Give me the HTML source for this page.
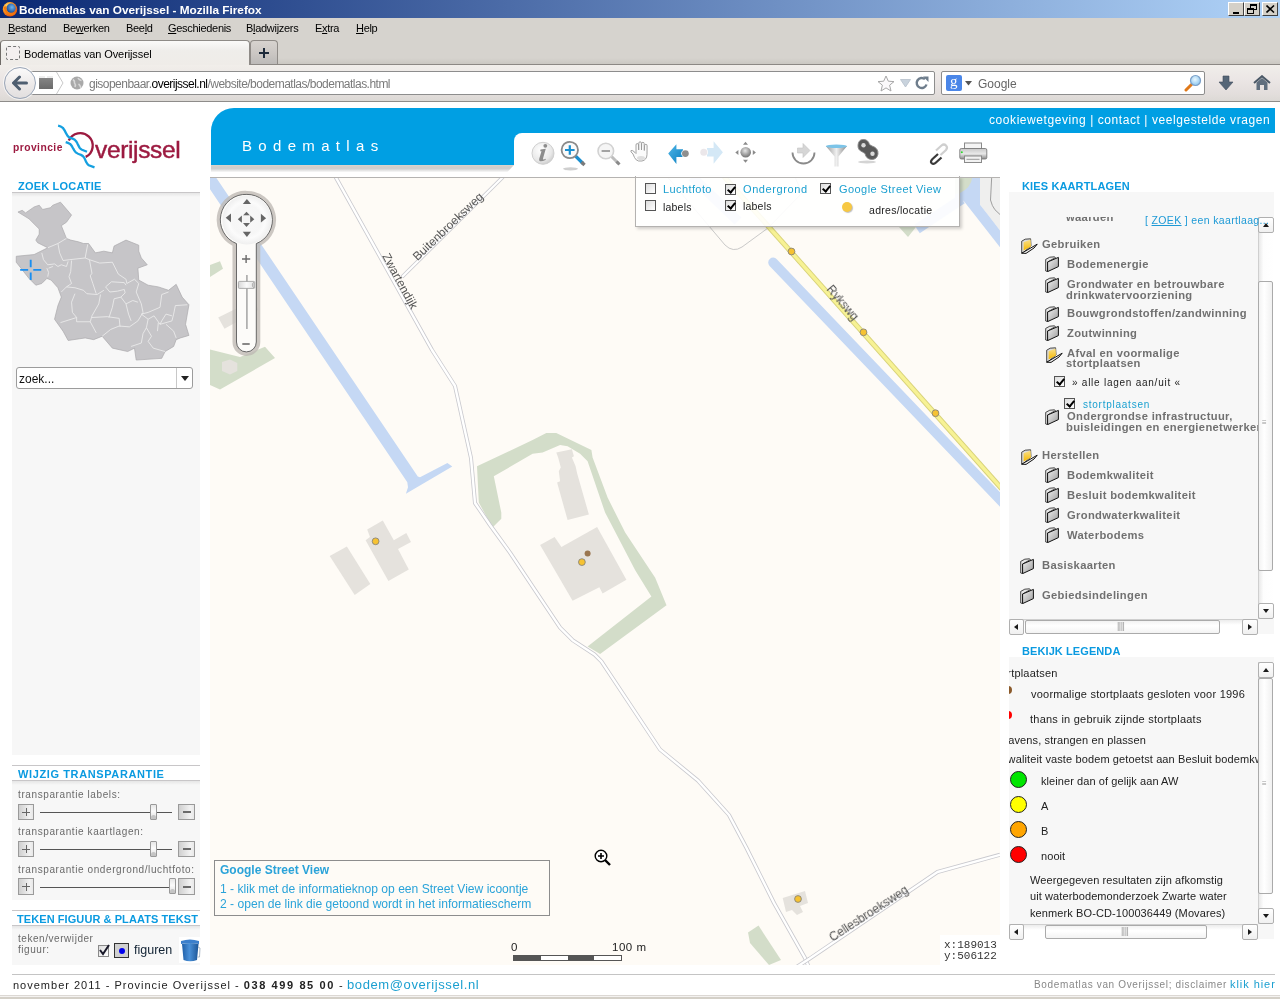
<!DOCTYPE html>
<html><head><meta charset="utf-8">
<style>
*{margin:0;padding:0;box-sizing:border-box}
html,body{width:1280px;height:999px;overflow:hidden;background:#fff;font-family:"Liberation Sans",sans-serif;position:relative}
.a{position:absolute}
.t{position:absolute;white-space:nowrap;line-height:1;will-change:transform}
/* chrome */
#title{left:0;top:0;width:1280px;height:17px;background:linear-gradient(90deg,#0a246a 0%,#3a6ea5 45%,#a6caf0 100%)}
#menubar{left:0;top:17px;width:1280px;height:24px;background:#d6d3ce}
#tabbar{left:0;top:41px;width:1280px;height:23px;background:#d6d3ce}
#navbar{left:0;top:64px;width:1280px;height:37px;background:linear-gradient(#e9e6e3,#e2dfdc)}
.wbtn{position:absolute;top:2px;width:16px;height:14px;background:#d4d0c8;border:1px solid;border-color:#fff #404040 #404040 #fff}
.menu{font-size:11px;color:#000;top:23.2px;letter-spacing:-0.3px}
.menu u{text-decoration:underline}
.hdr{font-weight:bold;color:#0a9ae0;font-size:10px;transform:scaleX(1.1);transform-origin:0 0}
.gbox{background:#f7f7f7}
.sbtn{position:absolute;width:16px;height:16px;background:linear-gradient(#fff,#eee);border:1px solid #b9b9b9;border-radius:2px}
.cb{width:11px;height:11px;border:1px solid #555;background:linear-gradient(135deg,#ddd,#fff)}
.cb.on::after{content:"";position:absolute;left:3px;top:0px;width:3px;height:6px;border:solid #000;border-width:0 2px 2px 0;transform:rotate(40deg)}
.sbb{width:16px;height:16px;background:linear-gradient(#fff,#f0f0f0);border:1px solid #b0b0b0;border-radius:2px}
.tri{position:absolute;width:0;height:0}
.tri.up{left:4px;top:5px;border-left:3.5px solid transparent;border-right:3.5px solid transparent;border-bottom:4px solid #1a1a1a}
.tri.dn{left:4px;top:5px;border-left:3.5px solid transparent;border-right:3.5px solid transparent;border-top:4px solid #1a1a1a}
.tri.lf{left:4px;top:3.5px;border-top:3.5px solid transparent;border-bottom:3.5px solid transparent;border-right:4px solid #1a1a1a}
.tri.rt{left:5px;top:3.5px;border-top:3.5px solid transparent;border-bottom:3.5px solid transparent;border-left:4px solid #1a1a1a}
.pbtn{width:16.5px;height:16.5px;border:1px solid #9a9a9a;background:linear-gradient(90deg,#cfcfcf,#f2f2f2 75%,#e8e8e8)}
.pl{position:absolute;left:3.5px;top:7px;width:8px;height:1px;background:#666}
.pv{position:absolute;left:7px;top:3.5px;width:1px;height:8px;background:#666}
.pl.mn{height:2px;top:6.5px;background:#6a6a6a}
.shnd::after{content:"";position:absolute;left:0;bottom:0;width:5.2px;height:4px;border-radius:3px 3px 0 0;background:#c4c4c4}
.shnd{width:7.2px;height:16.3px;border:1px solid #999;border-radius:1px;background:linear-gradient(#e6e6e6,#fbfbfb 45%,#eee 70%,#ddd)}
</style></head><body>

<!-- title bar -->
<div class="a" style="left:0;top:0;width:1280px;height:18px;background:linear-gradient(90deg,#0a2873,#b0d3f8)"></div>
<svg class="a" style="left:2px;top:1px" width="16" height="16" viewBox="0 0 16 16"><defs><radialGradient id="ffg" cx="0.35" cy="0.3" r="0.8"><stop offset="0" stop-color="#ffe37a"/><stop offset="0.45" stop-color="#ff9a1f"/><stop offset="1" stop-color="#d8400e"/></radialGradient><radialGradient id="ffb" cx="0.6" cy="0.4" r="0.6"><stop offset="0" stop-color="#6fb6ef"/><stop offset="1" stop-color="#1b4f9c"/></radialGradient></defs><circle cx="8" cy="8.3" r="7.2" fill="url(#ffg)"/><circle cx="9" cy="7.2" r="4.6" fill="url(#ffb)"/><path d="M1.5 6 Q3 13 9 14.5 Q14 14 15 9 Q13 13 8.5 12.5 Q4 11 4.5 5 Z" fill="#f0780f"/></svg>
<div class="t" style="left:19px;top:4.5px;font-size:11.8px;font-weight:bold;color:#fff">Bodematlas van Overijssel - Mozilla Firefox</div>
<div class="wbtn" style="left:1228px"><div class="a" style="left:4px;top:9px;width:6px;height:2px;background:#000"></div></div>
<div class="wbtn" style="left:1244px"><div class="a" style="left:5px;top:1px;width:7px;height:6px;border:1px solid #000;border-top-width:2px"></div><div class="a" style="left:2px;top:5px;width:7px;height:6px;border:1px solid #000;border-top-width:2px;background:#d4d0c8"></div></div>
<div class="wbtn" style="left:1262px"><svg class="a" style="left:3px;top:2px" width="9" height="8"><path d="M0.5 0.5 L8 7.5 M8 0.5 L0.5 7.5" stroke="#000" stroke-width="1.6"/></svg></div>

<!-- menu -->
<div class="a" style="left:0;top:18px;width:1280px;height:46px;background:#d6d3ce"></div>
<div class="t menu" style="left:7.8px"><u>B</u>estand</div>
<div class="t menu" style="left:62.5px">Be<u>w</u>erken</div>
<div class="t menu" style="left:125.8px">Bee<u>l</u>d</div>
<div class="t menu" style="left:167.5px"><u>G</u>eschiedenis</div>
<div class="t menu" style="left:245.5px">B<u>l</u>adwijzers</div>
<div class="t menu" style="left:314.5px">E<u>x</u>tra</div>
<div class="t menu" style="left:356px"><u>H</u>elp</div>

<!-- tabs -->
<div class="a" style="left:0;top:58px;width:1280px;height:6px;background:linear-gradient(#d6d3ce,#cbc8c2)"></div><div class="a" style="left:0;top:64px;width:1280px;height:1px;background:#8c8884"></div>
<div class="a" style="left:0;top:40px;width:250px;height:25px;background:linear-gradient(#fbfaf9,#efedea 40%,#efece8);border:1px solid #8f8b87;border-bottom:none;border-left-color:#6f6b67;border-radius:4px 4px 0 0"></div>
<div class="a" style="left:6px;top:46px;width:14px;height:14px;border:1px dashed #777;border-radius:2px;background:#f4f0f0"></div>
<div class="t" style="left:23.5px;top:48.9px;font-size:11px;color:#000;letter-spacing:-0.11px">Bodematlas van Overijssel</div>
<div class="a" style="left:250px;top:40px;width:28px;height:24px;background:linear-gradient(#d7d3cf,#c9c5c2 60%,#bcbab8);border:1px solid #8f8b87;border-bottom:none;border-radius:4px 4px 0 0"></div>
<div class="a" style="left:259px;top:52px;width:10px;height:2.2px;background:#1d2a3a"></div>
<div class="a" style="left:262.9px;top:48px;width:2.2px;height:10px;background:#1d2a3a"></div>

<!-- nav -->
<div class="a" style="left:0;top:65px;width:1280px;height:36px;background:linear-gradient(#f1eeea,#ebe6e5 40%,#e3dedc 80%,#dcd9d5)"></div>
<div class="a" style="left:0;top:101px;width:1280px;height:1px;background:#8e8c8a"></div>
<div class="a" style="left:30px;top:71px;width:905px;height:24px;background:#fff;border:1px solid #8d8d8d;border-radius:2px"></div>
<div class="a" style="left:4px;top:67px;width:32px;height:32px;border-radius:50%;background:linear-gradient(#fbfafa,#ebe8e8 60%,#e2dfdf);border:1px solid #9aa6b8;box-shadow:0 0 0 1px rgba(255,255,255,0.6)"></div>
<svg class="a" style="left:12px;top:75px" width="16" height="16" viewBox="0 0 16 16"><path d="M1.5 8 L7.5 2 M1.5 8 L7.5 14 M2 8 H14.5" stroke="#4e5e70" stroke-width="3" stroke-linecap="round" fill="none"/></svg>
<div class="a" style="left:39px;top:76px;width:14px;height:13px;background:linear-gradient(#8a8a8a,#6a6a6a)"></div>
<div class="a" style="left:39px;top:76px;width:14px;height:2px;background:#eee"></div>
<div class="a" style="left:45px;top:74px;width:2px;height:4px;background:#fff"></div>
<svg class="a" style="left:56px;top:72px" width="8" height="22"><path d="M0.5 0 L7 11 L0.5 22" fill="none" stroke="#c8c8c8" stroke-width="1"/></svg>
<svg class="a" style="left:70px;top:76px" width="14" height="14" viewBox="0 0 14 14"><circle cx="7" cy="7" r="6.5" fill="#a9a9a9"/><path d="M3 3.5 Q5 5 4.5 7 Q6 8.5 5 11 M8 2 Q9 4 11.5 4.5 M8.5 8 Q10 9 11 12" stroke="#d8d8d8" stroke-width="1.6" fill="none"/></svg>
<div class="t" style="left:88.5px;top:78.4px;font-size:12px;color:#7a7a7a;letter-spacing:-0.52px">gisopenbaar.<span style="color:#000">overijssel.nl</span>/website/bodematlas/bodematlas.html</div>
<svg class="a" style="left:877px;top:75px" width="18" height="17" viewBox="0 0 18 17"><path d="M9 1 L11.3 6.2 L17 6.6 L12.6 10.2 L14 16 L9 12.9 L4 16 L5.4 10.2 L1 6.6 L6.7 6.2 Z" fill="#fbf9fb" stroke="#a8a8a8" stroke-width="1"/></svg>
<svg class="a" style="left:900px;top:79px" width="11" height="9"><path d="M0.5 0.5 L10.5 0.5 L5.5 8 Z" fill="#c9d3dd" stroke="#b5bfca" stroke-width="0.8"/></svg>
<svg class="a" style="left:915px;top:76px" width="15" height="14" viewBox="0 0 15 14"><path d="M11.5 8.5 A5 5 0 1 1 10 3.2" fill="none" stroke="#6e7d8c" stroke-width="2.4"/><path d="M8 0.5 L13.5 0.5 L13.5 6 Z" fill="#6e7d8c"/></svg>
<div class="a" style="left:941px;top:71px;width:264px;height:24px;background:#fff;border:1px solid #8d8d8d;border-radius:2px"></div>
<div class="a" style="left:946px;top:75px;width:16px;height:16px;background:#4a86e8;border-radius:2px"></div>
<div class="t" style="left:949.5px;top:73.5px;font-family:'Liberation Serif';font-size:15px;color:#fff">g</div>
<svg class="a" style="left:965px;top:81px" width="7" height="5"><path d="M0 0 L7 0 L3.5 4.5 Z" fill="#555"/></svg>
<div class="t" style="left:977.5px;top:78.4px;font-size:12px;color:#666">Google</div>
<svg class="a" style="left:1184px;top:74px" width="18" height="18" viewBox="0 0 18 18"><defs><radialGradient id="lens" cx="0.45" cy="0.4" r="0.6"><stop offset="0" stop-color="#eaf8ff"/><stop offset="1" stop-color="#8cc6ee"/></radialGradient></defs><path d="M2 16 L7.5 10.5" stroke="#e07818" stroke-width="3" stroke-linecap="round"/><circle cx="11.5" cy="6.5" r="5" fill="url(#lens)" stroke="#7da0c8" stroke-width="1.2"/></svg>
<svg class="a" style="left:1218px;top:75px" width="16" height="16" viewBox="0 0 16 16"><path d="M5 1 H11 V7 H15 L8 15 L1 7 H5 Z" fill="#556677" stroke="#3f4c5a" stroke-width="0.6"/></svg>
<svg class="a" style="left:1253px;top:75px" width="18" height="16" viewBox="0 0 18 16"><path d="M1 8 L9 1.2 L17 8" fill="none" stroke="#4a5866" stroke-width="2"/><path d="M3.5 7.5 L9 3 L14.5 7.5 V15 H11 V10 H7 V15 H3.5 Z" fill="#5f6e7d"/></svg>

<!-- page: logo -->
<div class="t" style="left:13.2px;top:142.5px;font-size:10.3px;font-weight:bold;color:#9c1a40;letter-spacing:0.45px">provincie</div>
<div class="t" style="left:95px;top:137.8px;font-size:24.5px;color:#9c1a40;letter-spacing:-0.35px;-webkit-text-stroke:0.45px #9c1a40">verijssel</div>
<svg class="a" style="left:55px;top:122px" width="42" height="48" viewBox="55 122 42 48">
<path d="M68.8 140.6 A12.5 12.5 0 1 1 85.7 156.9" fill="none" stroke="#9c1a40" stroke-width="2.4"/>
<path d="M58.1 125.7 Q61 126.3 62.8 127.8 Q64.5 130 65.9 133 Q67.5 136.5 69.6 137.7 Q73 138.8 74.8 139.8 Q76.5 141.2 77.4 143.4 L79.5 147.6 Q80.5 149 82 149.7 L87 151.7" fill="none" stroke="#15a0e0" stroke-width="2.3"/>
<path d="M65.7 142.1 Q68 142.8 70.1 143.9 Q72 145.8 73.2 148.6 Q74.3 151 75.8 152.3 Q78 154 81 154.9 Q83 155.8 84.1 157.5 Q85.3 159.8 86.2 162.1 Q87.3 164.3 88.8 165.3 L94.5 167.3" fill="none" stroke="#15a0e0" stroke-width="2.3"/>
</svg>

<!-- blue header -->
<div class="a" style="left:211px;top:108px;width:1064px;height:25px;background:#009fe3;border-radius:23px 0 0 0"></div><div class="a" style="left:500px;top:130px;width:30px;height:12px;background:#009fe3"></div>
<div class="a" style="left:211px;top:130px;width:303px;height:35px;background:#009fe3"></div>
<svg class="a" style="left:211px;top:165px" width="303" height="8"><defs><linearGradient id="shd" x1="0" y1="0" x2="0" y2="1"><stop offset="0" stop-color="#ddd5cd"/><stop offset="0.25" stop-color="#d0cdca"/><stop offset="0.5" stop-color="#cfcfcf"/><stop offset="1" stop-color="#ffffff"/></linearGradient></defs><path d="M0 0 H303 L296 7.5 H0 Z" fill="url(#shd)"/></svg>
<div class="a" style="left:514px;top:133px;width:500px;height:44px;background:#fff;border-radius:8px 0 0 0"></div>
<div class="t" style="left:241.6px;top:138.1px;font-size:15px;color:#fff;letter-spacing:6.33px">Bodematlas</div>
<div class="t" style="left:989.4px;top:114.0px;font-size:12px;color:#fff;letter-spacing:0.57px">cookiewetgeving | contact | veelgestelde vragen</div>

<!-- toolbar icons -->
<svg class="a" style="left:525px;top:135px" width="470" height="40" viewBox="525 135 470 40">
<defs>
<radialGradient id="ig" cx="0.4" cy="0.35" r="0.7"><stop offset="0" stop-color="#ffffff"/><stop offset="0.7" stop-color="#e8e8e8"/><stop offset="1" stop-color="#c9c9c9"/></radialGradient>
<linearGradient id="bl" x1="0" y1="0" x2="1" y2="1"><stop offset="0" stop-color="#4fb6e8"/><stop offset="1" stop-color="#0b7fc0"/></linearGradient>
<linearGradient id="gr" x1="0" y1="0" x2="0" y2="1"><stop offset="0" stop-color="#c8c8c8"/><stop offset="0.5" stop-color="#e8e8e8"/><stop offset="1" stop-color="#8a8a8a"/></linearGradient>
<linearGradient id="fun" x1="0" x2="1"><stop offset="0" stop-color="#9a9a9a"/><stop offset="0.5" stop-color="#f0f0f0"/><stop offset="1" stop-color="#8a8a8a"/></linearGradient>
<radialGradient id="ball" cx="0.45" cy="0.35" r="0.6"><stop offset="0" stop-color="#e6e6e6"/><stop offset="1" stop-color="#7a7a7a"/></radialGradient>
</defs>
<!-- info -->
<circle cx="543" cy="153.3" r="11" fill="url(#ig)" stroke="#d0d0d0" stroke-width="1"/>
<circle cx="545.3" cy="145.8" r="1.9" fill="#8c8c8c"/>
<path d="M540.5 149.5 L545.8 148.8 L543 158.5 Q542.6 160 544.5 159.3 L545.8 158.7 L545.5 160 Q541.5 162 539.6 161 Q538.8 160.2 539.3 158.5 L541.5 151.2 L540.2 151.3 Z" fill="#8c8c8c"/>
<!-- zoom in -->
<ellipse cx="570.5" cy="168.8" rx="7.5" ry="1.6" fill="#cfcfcf"/>
<path d="M575.5 156 L583 163.5" stroke="#1a8fd0" stroke-width="3.2" stroke-linecap="butt"/>
<path d="M581.5 162 L584.5 165" stroke="#7a7a7a" stroke-width="3.4"/>
<circle cx="569.8" cy="150" r="8.2" fill="#fafafa" stroke="#8a8a8a" stroke-width="1.8"/>
<path d="M565 150 H574.6 M569.8 145.2 V154.8" stroke="#1a8fd0" stroke-width="2.2"/>
<!-- zoom out -->
<path d="M611.5 156.5 L618.5 163.5" stroke="#bdbdbd" stroke-width="3"/>
<path d="M616.5 161.5 L619.5 164.5" stroke="#8a8a8a" stroke-width="3"/>
<circle cx="605.8" cy="151" r="7.8" fill="#f5f5f5" stroke="#d2d2d2" stroke-width="1.6"/>
<path d="M601.6 151 H610" stroke="#9a9a9a" stroke-width="1.8"/>
<!-- hand -->
<path d="M633 154 Q630 151.5 631 150.5 Q632.5 149.8 635 152.5 L636 153.5 L636 145 Q636 143.5 637.3 143.5 Q638.5 143.5 638.5 145 L638.7 150 L638.8 143.2 Q638.8 141.8 640.1 141.8 Q641.4 141.8 641.4 143.2 L641.5 150 L641.6 143.6 Q641.6 142.3 642.9 142.3 Q644.2 142.3 644.2 143.6 L644.3 150.5 L644.6 145.5 Q644.7 144.3 645.9 144.3 Q647.2 144.4 647.1 145.8 L647 154.5 Q646.8 160 642 161 L638.5 161 Q636 160.5 634.5 157.5 Z" fill="#fbfbfb" stroke="#9a9a9a" stroke-width="0.9"/>
<ellipse cx="641" cy="158" rx="4" ry="2" fill="#dedede"/>
<!-- back -->
<path d="M668.2 153.6 L676.4 144.3 L676.4 149.2 L683 149.2 L683 156.9 L676.4 156.9 L676.4 164 Z" fill="url(#bl)"/>
<circle cx="685.4" cy="153.6" r="4.2" fill="#fff"/>
<circle cx="685.4" cy="153.6" r="3.4" fill="#8e8e8e"/>
<!-- forward -->
<path d="M722.9 152.3 L713.6 141.2 L713.6 148.1 L707 148.1 L707 156.4 L713.6 156.4 L713.6 163.8 Z" fill="#d4e8f6"/>
<circle cx="703.8" cy="152.3" r="4.2" fill="#fff"/>
<circle cx="703.8" cy="152.3" r="3.5" fill="#ebe7ea"/>
<!-- pan -->
<circle cx="745.7" cy="152.3" r="5.3" fill="url(#ball)"/>
<path d="M745.5 141.8 L748 144.8 L743 144.8 Z M745.5 162.8 L748 159.8 L743 159.8 Z M735.3 152.5 L738.4 150 L738.4 155 Z M755.9 152.5 L752.8 150 L752.8 155 Z" fill="#8a8a8a"/>
<!-- refresh arc -->
<path d="M792.5 152.5 A11 11 0 0 0 814.5 152.5" fill="none" stroke="#8a8a8a" stroke-width="1.8"/>
<path d="M797.5 148 L803 148 L803 143.5 L810 150.5 L803 157.5 L803 153 L797.5 153 Z" fill="#d6d6d6" stroke="#c2c2c2" stroke-width="0.6"/>
<!-- funnel -->
<path d="M825.8 146 L847 146 L838.5 156.5 L838.5 166.5 L834.5 166.5 L834.5 156.5 Z" fill="url(#fun)"/>
<ellipse cx="836.4" cy="146.3" rx="10.5" ry="1.8" fill="#7cc4e8"/>
<!-- chain -->
<ellipse cx="867" cy="162" rx="9" ry="1.4" fill="#d4d4d4"/>
<path d="M862.5 139.5 Q868 139 869.5 144.5 L872 146 Q878.5 148 878 154 Q877 159.5 871.5 159.5 Q866 159 865 153.5 L862.5 152 Q857.5 150 858 145 Q858.5 140 862.5 139.5 Z" fill="#5a5a5a" stroke="#8a8a8a" stroke-width="0.9"/>
<circle cx="863.5" cy="145.3" r="2.2" fill="#dadada"/>
<circle cx="872.5" cy="153.8" r="2.2" fill="#dadada"/>
<!-- link -->
<path d="M936 150.5 L941.5 145.5 Q944 143.5 946 145.5 Q948 147.5 946 150 L940.5 155" fill="none" stroke="#cfcfcf" stroke-width="2.2"/>
<path d="M938 154 L932.5 159 Q930 161.5 931.5 163 Q933.5 165 936 162.5 L941.5 157.5" fill="none" stroke="#3a3a3a" stroke-width="2.2"/>
<!-- printer -->
<rect x="964.5" y="143" width="17" height="6" fill="#f4f4f4" stroke="#8a8a8a" stroke-width="1"/>
<rect x="959.8" y="148.5" width="27" height="10.5" rx="1.5" fill="url(#gr)" stroke="#7a7a7a" stroke-width="0.9"/>
<rect x="964.5" y="156" width="17" height="6.5" fill="#f2f2f2" stroke="#8a8a8a" stroke-width="1"/>
<line x1="966.5" y1="159.3" x2="979.5" y2="159.3" stroke="#9a9a9a" stroke-width="1"/>
<circle cx="961.8" cy="152.2" r="1" fill="#2ad92a"/>
</svg>

<!-- left panel -->
<div class="t hdr" style="left:17.5px;top:181.8px;letter-spacing:0.18px">ZOEK LOCATIE</div>
<div class="a gbox" style="left:12px;top:192px;width:188px;height:563px;border-top:1px solid #c8c6c8"></div>
<svg class="a" style="left:12px;top:195px" width="188" height="170" viewBox="0 0 1105 999"><polygon points="35,100 60,90 80,105 130,70 160,60 180,85 225,75 240,60 285,42 350,118 320,160 290,180 320,255 345,265 390,275 420,285 450,285 490,340 540,330 590,340 600,300 670,265 745,295 745,330 760,370 795,410 740,430 745,500 800,530 860,540 920,560 965,525 1000,600 1040,645 1020,760 1040,825 990,840 965,850 950,890 900,920 880,960 730,970 720,900 680,920 590,900 530,830 480,850 430,840 330,855 300,800 250,730 270,650 290,600 270,545 230,500 205,490 175,520 140,530 100,490 25,395 25,360 130,350 210,310 150,280 140,265 160,230 160,200 100,140" fill="#c6c5c8" stroke="#a9a8ab" stroke-width="4"/><polyline points="210,310 270,285 320,255" fill="none" stroke="#ececec" stroke-width="5"/><polyline points="270,285 280,340 300,385 340,380 430,370 445,290" fill="none" stroke="#ececec" stroke-width="5"/><polyline points="175,340 185,380 210,410 250,405 270,420 290,410 320,420 330,390" fill="none" stroke="#ececec" stroke-width="5"/><polyline points="205,430 215,455 210,480" fill="none" stroke="#ececec" stroke-width="5"/><polyline points="215,430 240,420" fill="none" stroke="#ececec" stroke-width="5"/><polyline points="350,385 345,450 335,480 350,520 320,540 290,570" fill="none" stroke="#ececec" stroke-width="5"/><polyline points="430,370 455,380 470,460 460,475 475,520 495,580" fill="none" stroke="#ececec" stroke-width="5"/><polyline points="320,540 370,545 420,560 440,580 500,585 540,560" fill="none" stroke="#ececec" stroke-width="5"/><polyline points="455,380 515,400 590,395 625,465 670,495 675,520 720,495 745,520" fill="none" stroke="#ececec" stroke-width="5"/><polyline points="550,540 585,510 660,515 670,530" fill="none" stroke="#ececec" stroke-width="5"/><polyline points="550,540 575,570 620,565 660,555 665,575 640,600 600,610 590,660 570,720" fill="none" stroke="#ececec" stroke-width="5"/><polyline points="370,580 350,630 355,690 380,720 380,745 460,745 470,710 510,640 520,585" fill="none" stroke="#ececec" stroke-width="5"/><polyline points="285,750 380,720" fill="none" stroke="#ececec" stroke-width="5"/><polyline points="460,745 495,810" fill="none" stroke="#ececec" stroke-width="5"/><polyline points="470,720 560,715 630,725 635,775" fill="none" stroke="#ececec" stroke-width="5"/><polyline points="530,830 580,790 630,770 690,775 740,740 770,690 760,640 730,570 745,520" fill="none" stroke="#ececec" stroke-width="5"/><polyline points="640,600 670,640 685,700 700,740" fill="none" stroke="#ececec" stroke-width="5"/><polyline points="670,640 710,620 740,630" fill="none" stroke="#ececec" stroke-width="5"/><polyline points="760,700 800,690 870,660 880,585 920,570" fill="none" stroke="#ececec" stroke-width="5"/><polyline points="760,700 800,730 835,710 870,760 905,750 940,740 950,700 960,650 1030,645" fill="none" stroke="#ececec" stroke-width="5"/><polyline points="870,760 880,740 905,700 940,710" fill="none" stroke="#ececec" stroke-width="5"/><polyline points="905,760 950,800 965,840" fill="none" stroke="#ececec" stroke-width="5"/><polyline points="800,730 790,780 770,815 760,870 700,890" fill="none" stroke="#ececec" stroke-width="5"/><polyline points="790,780 820,830 800,860 830,900 900,920" fill="none" stroke="#ececec" stroke-width="5"/><polyline points="860,750 855,800" fill="none" stroke="#ececec" stroke-width="5"/><path d="M48 440 H95 M125 440 H172 M110 380 V425 M110 455 V500" stroke="#1a8ef0" stroke-width="11"/></svg><div class="a" style="left:16px;top:367px;width:177px;height:22px;background:#fff;border:1px solid #9c9c9c;border-radius:3px"></div>
<div class="a" style="left:176px;top:368px;width:1px;height:20px;background:#c8c8c8"></div>
<div class="a" style="left:181px;top:376px;width:0;height:0;border-left:4px solid transparent;border-right:4px solid transparent;border-top:5px solid #222"></div>
<div class="t" style="left:19px;top:373px;font-size:12px;color:#111">zoek...</div>

<div class="a" style="left:12px;top:765px;width:188px;height:1px;background:#c8c6c8"></div>
<div class="t hdr" style="left:17.5px;top:769.8px;letter-spacing:0.56px">WIJZIG TRANSPARANTIE</div>
<div class="a gbox" style="left:12px;top:780px;width:188px;height:120px;border-top:1px solid #c8c6c8"></div>

<div class="t" style="left:17.6px;top:790.2px;font-size:10px;color:#6a6a6a;letter-spacing:0.6px">transparantie labels:</div>
<div class="t" style="left:17.6px;top:827.0px;font-size:10px;color:#6a6a6a;letter-spacing:0.6px">transparantie kaartlagen:</div>
<div class="t" style="left:17.6px;top:864.7px;font-size:10px;color:#6a6a6a;letter-spacing:0.6px">transparantie ondergrond/luchtfoto:</div>
<div class="a pbtn" style="left:17.5px;top:803.5px"><div class="pl"></div><div class="pv"></div></div>
<div class="a pbtn" style="left:178.3px;top:803.5px"><div class="pl mn"></div></div>
<div class="a" style="left:40px;top:812.1px;width:131.5px;height:1px;background:#555"></div>
<div class="a shnd" style="left:149.5px;top:803.5px"></div>
<div class="a pbtn" style="left:17.5px;top:840.5px"><div class="pl"></div><div class="pv"></div></div>
<div class="a pbtn" style="left:178.3px;top:840.5px"><div class="pl mn"></div></div>
<div class="a" style="left:40px;top:849.1px;width:131.5px;height:1px;background:#555"></div>
<div class="a shnd" style="left:149.5px;top:840.5px"></div>
<div class="a pbtn" style="left:17.5px;top:878.2px"><div class="pl"></div><div class="pv"></div></div>
<div class="a pbtn" style="left:178.3px;top:878.2px"><div class="pl mn"></div></div>
<div class="a" style="left:40px;top:886.8px;width:131.5px;height:1px;background:#555"></div>
<div class="a shnd" style="left:169.0px;top:878.2px"></div>
<div class="a" style="left:12px;top:910px;width:188px;height:1px;background:#c8c6c8"></div>
<div class="t hdr" style="left:17.2px;top:914.8px;letter-spacing:0.07px">TEKEN FIGUUR &amp; PLAATS TEKST</div>
<div class="a gbox" style="left:12px;top:925px;width:188px;height:40px;border-top:1px solid #c8c6c8"></div><div class="t" style="left:17.6px;top:934.2px;font-size:10px;color:#6a6a6a;letter-spacing:0.55px;line-height:10.5px">teken/verwijder<br>figuur:</div>
<div class="a" style="left:97.5px;top:945px;width:11.5px;height:12px;border:1px solid #8a8a8a;background:linear-gradient(135deg,#ddd,#fff)"></div>
<svg class="a" style="left:98px;top:943px" width="12" height="14"><path d="M2 7 L5 11 L11 2" fill="none" stroke="#1a1a2a" stroke-width="2"/></svg>
<div class="a" style="left:114px;top:943px;width:15px;height:15px;border:1px solid #333;background:#d0d0d0"></div>
<div class="a" style="left:118.5px;top:947.5px;width:6px;height:6px;border-radius:50%;background:#0000ee"></div>
<div class="t" style="left:134px;top:944.4px;font-size:12.5px;color:#112233">figuren</div>
<svg class="a" style="left:179px;top:937px" width="22" height="26" viewBox="0 0 22 26"><defs><linearGradient id="bin" x1="0" x2="1"><stop offset="0" stop-color="#1f5fa8"/><stop offset="0.45" stop-color="#4a90d8"/><stop offset="1" stop-color="#1c5596"/></linearGradient></defs>
<rect x="0" y="0" width="22" height="26" fill="#fff"/>
<path d="M2 4 Q11 1 20 4 L20 7 Q11 5 2 7 Z" fill="#3b7fcc"/>
<path d="M3 7 Q11 5 19.5 7 L18 23 Q11 25.5 4.5 23 Z" fill="url(#bin)"/>
<path d="M19 10 L21 11 L20.5 20 L18.5 20" fill="none" stroke="#9ab" stroke-width="0.8"/></svg>


<div class="a" style="left:12px;top:193px;width:188px;height:4px;background:linear-gradient(rgba(0,0,0,0.07),rgba(0,0,0,0))"></div>
<div class="a" style="left:12px;top:781px;width:188px;height:4px;background:linear-gradient(rgba(0,0,0,0.07),rgba(0,0,0,0))"></div>
<div class="a" style="left:12px;top:926px;width:188px;height:4px;background:linear-gradient(rgba(0,0,0,0.07),rgba(0,0,0,0))"></div>
<!-- map -->
<svg class="a" style="left:210px;top:177px" width="790" height="788" viewBox="210 177 790 788">
<rect x="210" y="177" width="790" height="788" fill="#fefbf6"/>
<!-- top-right gray area -->
<path d="M980 177 L1000 177 L1000 230.5 L987.7 214.5 L980 204.8 Z" fill="#efefee"/>
<path d="M991.7 177 L990.5 200 Q992 206 994.9 209.7 L1000 214.5" fill="none" stroke="#8a8a8a" stroke-width="0.8"/>
<path d="M955 177 L980 177 L980 204.8 L987.7 214.5 L1000 230.5 L1000 247.3 L963.6 200.8 L955 203 Z" fill="#c5d8f4"/>
<path d="M955 177 L972.4 177 Q971 188 959.6 193.2 L955 194 Z" fill="#d3ddc9"/>
<!-- green areas -->
<path d="M210 265 L220 261.3 L223 268.8 L210 277 Z" fill="#d3ddc9"/>
<path d="M210 349.5 L240 357 L265 346.8 L275 358 L220 389.6 L210 385 Z" fill="#d3ddc9"/>
<path d="M477 466.3 L532.6 440 L546.3 433 L556.3 433 L591.4 450 L592.6 457.5 L607.6 497.6 L625.2 532.6 L650.2 570.2 L655.2 577.7 L666.5 605.2 L600.1 654 L587.6 646.5 L651.4 596.4 L635.2 570.2 L605.1 512.6 L587.6 461.3 L580.1 453.8 L567.6 446.3 L560.1 445 L542.6 452.5 L532.6 453.8 L493.8 476.3 L501.3 512.6 L501.3 518.8 L492.5 527.6 L478.8 502.6 Z" fill="#d3ddc9"/>
<path d="M748 932.5 L758.5 925.6 L781 960 L769 965 L750 943 Z" fill="#d3ddc9"/>
<path d="M899 227 L916 227 L908 237 Z" fill="#d3ddc9"/>

<!-- buildings -->
<g fill="#e5e2dd">
<path d="M218.2 317.6 L254.5 299.5 L258.3 310 L224.5 328.8 Z"/>
<path d="M222 362 L230 359.6 L237.3 363 L237.3 371 L230 374.6 L222 371 Z"/>
<path d="M556.3 452.5 L571.9 449.3 L573.9 456.3 L571.9 457.5 L575.6 466.3 L577.1 473.3 L588.9 514.6 L567.6 520.1 L557.1 482.6 L560.1 481.3 L558.8 471.3 L560.8 467.5 L558.3 458 Z"/>
<path d="M540.1 545.1 L554.6 536.9 L561.4 546.9 L597.1 527.1 L626.4 579.7 L602.6 593.4 L599.4 587.2 L572.6 600.7 Z"/>
<path d="M329.7 555.9 L346.9 546.6 L370.3 584 L354.7 595 Z"/>
<path d="M367.2 529.4 L382.8 520.6 L393.8 540.3 L406.3 533 L411 541.9 L398 549 L408.8 569.4 L388.4 581 L365.6 540.3 L370 537 Z"/>
<path d="M782.7 898 L805 891 L808 903 L800 906 L803 912 L797 915 L792 910 L786 912 Z"/>
</g>
<!-- water -->
<g stroke="#c5d8f4" fill="none" stroke-linecap="butt">

<path d="M773.2 262.6 L1010 510" stroke-width="10" stroke-linecap="round"/>
<path d="M917 229 L962 199" stroke-width="10"/>
<line x1="692" y1="177" x2="738" y2="221" stroke-width="10"/>
</g>
<path d="M197 170 L211 170 L417.8 476.5 L420 477.3 L447.4 463.1 L452.3 466.4 L405.9 493.7 L408 487.2 L407.3 482.3 Z" fill="#c5d8f4"/>
<!-- faint u-road -->
<path d="M667.5 177 L725 245 Q733 253 742 247 L768 228 L802 193 L795 177" fill="none" stroke="#c3c3c3" stroke-width="0.9"/>
<!-- double roads -->
<g fill="none" stroke-linejoin="round">
<path id="rz" d="M335.6 177 L432 350 L455 386 L471 458 L475 503 L490 525 L510 552.6 L535 590.2 L560.1 627.7 L572.6 640.2 L594.5 654.5 L601.4 661.4 L660 749.5 L698 780.6 L729 815 L746.5 848 L774 903 L805 958 L810 970" stroke="#c9c9ce" stroke-width="4"/>
<path d="M335.6 177 L432 350 L455 386 L471 458 L475 503 L490 525 L510 552.6 L535 590.2 L560.1 627.7 L572.6 640.2 L594.5 654.5 L601.4 661.4 L660 749.5 L698 780.6 L729 815 L746.5 848 L774 903 L805 958 L810 970" stroke="#ffffff" stroke-width="2.4"/>
<path d="M402 277 L503 177" stroke="#c9c9ce" stroke-width="3.8"/>
<path d="M402 277 L503 177" stroke="#ffffff" stroke-width="2.2"/>
<path d="M795 968 L809.4 958.8 L937.5 872 L1000 854.8" stroke="#c9c9ce" stroke-width="4"/>
<path d="M795 968 L809.4 958.8 L937.5 872 L1000 854.8" stroke="#ffffff" stroke-width="2.4"/>
</g>
<!-- yellow road -->
<line x1="720" y1="172" x2="1010" y2="498" stroke="#d8d27a" stroke-width="5.2"/>
<line x1="720" y1="172" x2="1010" y2="498" stroke="#f7f294" stroke-width="3.4"/>
<g fill="#f6c232" stroke="#7c7c7c" stroke-width="0.8">
<circle cx="791.5" cy="251.5" r="3.4"/><circle cx="863.5" cy="332.3" r="3.4"/><circle cx="935.5" cy="413.2" r="3.4"/>
<circle cx="375.6" cy="541.3" r="3.4"/><circle cx="581.9" cy="562.1" r="3.4"/><circle cx="798" cy="899" r="3.4"/>
</g>
<circle cx="587.6" cy="553.4" r="3" fill="#9a7650"/>
<!-- labels -->
<g font-family="Liberation Sans" font-size="12" fill="#555" style="will-change:transform">
<text transform="translate(400,281) rotate(61.7)" text-anchor="middle" dy="4">Zwartendijk</text>
<text transform="translate(448,226.5) rotate(-43.7)" text-anchor="middle" dy="4">Buitenbroeksweg</text>
<text transform="translate(842.6,302.9) rotate(49.6)" text-anchor="middle" dy="4">Rykswg</text>
<text transform="translate(868.7,913.5) rotate(-33.1)" text-anchor="middle" dy="4">Cellesbroeksweg</text>
</g>
</svg>
<!-- zoom control -->
<svg class="a" style="left:210px;top:177px" width="80" height="190" viewBox="210 177 80 190">
<defs><radialGradient id="pg" cx="50%" cy="50%" r="50%"><stop offset="0" stop-color="#f8f8f8"/><stop offset="0.6" stop-color="#f6f6f6"/><stop offset="0.75" stop-color="#fbfbfb"/><stop offset="1" stop-color="#efefef"/></radialGradient>
<linearGradient id="hg" x1="0" x2="1"><stop offset="0" stop-color="#d8d8d8"/><stop offset="0.5" stop-color="#fafafa"/><stop offset="1" stop-color="#e0e0e0"/></linearGradient></defs>
<path d="M246.9 190.9 A29 29 0 0 1 260.3 245.7 L260.3 342 A13.8 13.8 0 0 1 232.5 342 L232.5 245.7 A29 29 0 0 1 246.9 190.9 Z" fill="rgba(190,184,180,0.78)"/>
<path d="M246.9 194.4 A25.5 25.5 0 0 1 256.3 243.6 L256.3 342 A9.8 9.8 0 0 1 236.5 342 L236.5 243.6 A25.5 25.5 0 0 1 246.9 194.4 Z" fill="#fcfbf9" stroke="#5a5a5a" stroke-width="0.9"/>
<circle cx="246.9" cy="219.9" r="24.5" fill="url(#pg)"/>
<g fill="#666">
<path d="M246.9 199 L251 204 L242.8 204 Z"/>
<path d="M246.9 237 L251 231.8 L242.8 231.8 Z"/>
<path d="M225.7 217.8 L231 213.4 L231 222.2 Z"/>
<path d="M266.1 218.2 L260.9 213.8 L260.9 222.6 Z"/>
<path d="M246.5 211.7 L243 215.4 L250 215.4 Z"/>
<path d="M246.5 227 L243 223.1 L250 223.1 Z"/>
<path d="M237.8 219.2 L241.9 215.6 L241.9 222.8 Z"/>
<path d="M254.3 219.2 L250.2 215.6 L250.2 222.8 Z"/>
</g>
<rect x="242.3" y="215.6" width="7.6" height="7.2" fill="#f4f4f4"/>
<path d="M242 259 L250.2 259 M246.1 255 L246.1 263" stroke="#6a6a6a" stroke-width="1.4"/>
<line x1="246.9" y1="275" x2="246.9" y2="329" stroke="#a8a8a8" stroke-width="1.6"/>
<rect x="238.4" y="281.4" width="16.3" height="7" rx="1" fill="url(#hg)" stroke="#9a9a9a" stroke-width="0.8"/>
<path d="M254 282 A3.5 3.5 0 0 0 254 288" fill="#ccc" stroke="#999" stroke-width="0.6"/>
<line x1="242.3" y1="344" x2="249.7" y2="344" stroke="#6a6a6a" stroke-width="1.6"/>
</svg>
<!-- layers popup -->
<div class="a" style="left:635px;top:176px;width:325px;height:51px;background:rgba(255,255,255,0.9);border:1px solid #b4b2b0;border-top:none;box-shadow:2px 2px 3px rgba(0,0,0,0.18)"></div><div class="a" style="left:636px;top:176px;width:323px;height:2px;background:#fff"></div>
<div class="a cb" style="left:645px;top:183px"></div>
<div class="a cb" style="left:645px;top:200px"></div>
<div class="a cb on" style="left:725px;top:184px"></div>
<div class="a cb on" style="left:725px;top:200px"></div>
<div class="a cb on" style="left:820px;top:183px"></div>
<div class="t" style="left:662.8px;top:184.1px;font-size:11px;color:#1a9fd0;letter-spacing:0.4px">Luchtfoto</div>
<div class="t" style="left:742.5px;top:184.1px;font-size:11px;color:#1a9fd0;letter-spacing:0.6px">Ondergrond</div>
<div class="t" style="left:839px;top:184.3px;font-size:11px;color:#1a9fd0;letter-spacing:0.43px">Google Street View</div>
<div class="t" style="left:662.8px;top:201.9px;font-size:10.5px;color:#222;letter-spacing:0.2px">labels</div>
<div class="t" style="left:742.5px;top:201.1px;font-size:10.5px;color:#222;letter-spacing:0.2px">labels</div>
<div class="t" style="left:869px;top:204.9px;font-size:10.5px;color:#222;letter-spacing:0.3px">adres/locatie</div>
<div class="a" style="left:841.7px;top:202.2px;width:10px;height:10px;border-radius:50%;background:#f7c843;box-shadow:1px 1px 1px rgba(0,0,0,0.25)"></div>
<!-- street view info box -->
<div class="a" style="left:214px;top:860px;width:336px;height:56px;border:1px solid #8d8d8d;background:rgba(255,255,255,0.05)"></div>
<div class="t" style="left:220px;top:864px;font-size:12px;font-weight:bold;color:#2aa3d9">Google Street View</div>
<div class="t" style="left:220px;top:882px;font-size:12.1px;color:#2aa3d9;line-height:15px">1 - klik met de informatieknop op een Street View icoontje<br>2 - open de link die getoond wordt in het informatiescherm</div>
<!-- scale bar -->
<div class="t" style="left:510.5px;top:942px;font-size:11.5px;color:#222">0</div>
<div class="t" style="left:611.5px;top:942px;font-size:11.5px;color:#222;letter-spacing:0.5px">100 m</div>
<div class="a" style="left:513px;top:955px;width:109px;height:6px;border:1px solid #555;background:linear-gradient(90deg,#555 0 25%,#fff 25% 50%,#555 50% 75%,#fff 75% 100%)"></div>
<!-- cursor -->
<svg class="a" style="left:593px;top:848px" width="20" height="20" viewBox="0 0 20 20"><circle cx="8" cy="8" r="5.8" fill="#fff" stroke="#000" stroke-width="1.4"/><path d="M5 8 H11 M8 5 V11" stroke="#000" stroke-width="1.6"/><path d="M12 12 L17 17" stroke="#000" stroke-width="2.4"/></svg>
<div class="a" style="left:940px;top:935px;width:60px;height:30px;background:#fff"></div>
<div class="t" style="left:944px;top:940px;font-family:'Liberation Mono';font-size:11px;color:#333;line-height:11px">x:189013<br>y:506122</div>
<div class="a" style="left:210px;top:177px;width:790px;height:1px;background:#b5b3b1"></div>

<!-- right panel -->
<div class="t hdr" style="left:1021.5px;top:181.8px;letter-spacing:0.12px">KIES KAARTLAGEN</div>
<div class="a gbox" style="left:1009px;top:192px;width:265px;height:442px"></div>
<div class="t hdr" style="left:1021.5px;top:646.8px;letter-spacing:0.08px">BEKIJK LEGENDA</div>
<div class="a gbox" style="left:1009px;top:657px;width:265px;height:282px"></div><svg width="0" height="0" style="position:absolute">
<defs>
<linearGradient id="fg" x1="0" y1="0" x2="1" y2="1"><stop offset="0" stop-color="#f4f4f4"/><stop offset="1" stop-color="#9a9a9a"/></linearGradient>
<linearGradient id="yg" x1="0" y1="0" x2="0" y2="1"><stop offset="0" stop-color="#f9e08a"/><stop offset="1" stop-color="#f5b800"/></linearGradient>
<symbol id="fc" viewBox="0 0 14 16">
<path d="M0.7 3.4 L4.8 1.2 L9.6 0.8 L10.4 1.6 L2.6 6 L2.6 15.6 L0.7 15 Z" fill="#e6e6e6" stroke="#333" stroke-width="0.9" stroke-linejoin="round"/>
<path d="M2.6 6 L13.4 1.4 L13.4 10.6 L2.6 15.6 Z" fill="url(#fg)" stroke="#111" stroke-width="1" stroke-linejoin="round"/>
</symbol>
<symbol id="fo" viewBox="0 0 17 16">
<path d="M0.7 3.2 L4.2 1.2 L9.6 0.8 L10 8 L2.2 14.6 L0.7 15.2 Z" fill="#dcdcdc" stroke="#333" stroke-width="0.9" stroke-linejoin="round"/>
<path d="M2.6 4.2 L9.6 1.6 L10 8.6 L2.6 12.6 Z" fill="url(#yg)"/>
<path d="M0.7 15.2 L16.2 6.2 L13 10 L5 15.4 Z" fill="#f0f0f0" stroke="#111" stroke-width="1" stroke-linejoin="round"/>
</symbol>
</defs></svg>
<div class="a" style="left:1009px;top:217px;width:249px;height:402px;overflow:hidden"><div class="t" style="left:56.5px;top:-4.3px;font-size:10px;font-weight:700;color:#707070;letter-spacing:0.3px;transform:scaleX(1.12);transform-origin:0 0">waarden</div>
<div class="t" style="left:33.0px;top:22.6px;font-size:10px;font-weight:700;color:#707070;letter-spacing:0.3px;transform:scaleX(1.12);transform-origin:0 0">Gebruiken</div>
<div class="t" style="left:57.8px;top:42.7px;font-size:10px;font-weight:700;color:#707070;letter-spacing:0.3px;transform:scaleX(1.12);transform-origin:0 0">Bodemenergie</div>
<div class="t" style="left:57.8px;top:63.2px;font-size:10px;font-weight:700;color:#707070;letter-spacing:0.3px;transform:scaleX(1.12);transform-origin:0 0">Grondwater en betrouwbare</div>
<div class="t" style="left:57.3px;top:73.9px;font-size:10px;font-weight:700;color:#707070;letter-spacing:0.3px;transform:scaleX(1.12);transform-origin:0 0">drinkwatervoorziening</div>
<div class="t" style="left:57.8px;top:92.0px;font-size:10px;font-weight:700;color:#707070;letter-spacing:0.3px;transform:scaleX(1.12);transform-origin:0 0">Bouwgrondstoffen/zandwinning</div>
<div class="t" style="left:57.8px;top:111.5px;font-size:10px;font-weight:700;color:#707070;letter-spacing:0.3px;transform:scaleX(1.12);transform-origin:0 0">Zoutwinning</div>
<div class="t" style="left:57.8px;top:131.7px;font-size:10px;font-weight:700;color:#707070;letter-spacing:0.3px;transform:scaleX(1.12);transform-origin:0 0">Afval en voormalige</div>
<div class="t" style="left:57.3px;top:142.4px;font-size:10px;font-weight:700;color:#707070;letter-spacing:0.3px;transform:scaleX(1.12);transform-origin:0 0">stortplaatsen</div>
<div class="t" style="left:57.8px;top:195.4px;font-size:10px;font-weight:700;color:#707070;letter-spacing:0.3px;transform:scaleX(1.12);transform-origin:0 0">Ondergrondse infrastructuur,</div>
<div class="t" style="left:57.3px;top:206.1px;font-size:10px;font-weight:700;color:#707070;letter-spacing:0.3px;transform:scaleX(1.12);transform-origin:0 0">buisleidingen en energienetwerken</div>
<div class="t" style="left:33.0px;top:234.3px;font-size:10px;font-weight:700;color:#707070;letter-spacing:0.3px;transform:scaleX(1.12);transform-origin:0 0">Herstellen</div>
<div class="t" style="left:57.8px;top:254.1px;font-size:10px;font-weight:700;color:#707070;letter-spacing:0.3px;transform:scaleX(1.12);transform-origin:0 0">Bodemkwaliteit</div>
<div class="t" style="left:57.8px;top:274.0px;font-size:10px;font-weight:700;color:#707070;letter-spacing:0.3px;transform:scaleX(1.12);transform-origin:0 0">Besluit bodemkwaliteit</div>
<div class="t" style="left:57.8px;top:294.0px;font-size:10px;font-weight:700;color:#707070;letter-spacing:0.3px;transform:scaleX(1.12);transform-origin:0 0">Grondwaterkwaliteit</div>
<div class="t" style="left:57.8px;top:314.0px;font-size:10px;font-weight:700;color:#707070;letter-spacing:0.3px;transform:scaleX(1.12);transform-origin:0 0">Waterbodems</div>
<div class="t" style="left:33.0px;top:343.7px;font-size:10px;font-weight:700;color:#707070;letter-spacing:0.3px;transform:scaleX(1.12);transform-origin:0 0">Basiskaarten</div>
<div class="t" style="left:33.0px;top:373.7px;font-size:10px;font-weight:700;color:#707070;letter-spacing:0.3px;transform:scaleX(1.12);transform-origin:0 0">Gebiedsindelingen</div>
<div class="t" style="left:63.0px;top:160.6px;font-size:10px;font-weight:400;color:#222;letter-spacing:0.75px">&raquo; alle lagen aan/uit &laquo;</div>
<div class="t" style="left:73.9px;top:182.8px;font-size:10px;font-weight:400;color:#1aa0d0;letter-spacing:0.75px">stortplaatsen</div>
<svg class="a" style="left:36.0px;top:39.0px" width="14" height="16"><use href="#fc"/></svg>
<svg class="a" style="left:36.0px;top:59.8px" width="14" height="16"><use href="#fc"/></svg>
<svg class="a" style="left:36.0px;top:88.8px" width="14" height="16"><use href="#fc"/></svg>
<svg class="a" style="left:36.0px;top:108.0px" width="14" height="16"><use href="#fc"/></svg>
<svg class="a" style="left:36.0px;top:191.5px" width="14" height="16"><use href="#fc"/></svg>
<svg class="a" style="left:36.0px;top:250.4px" width="14" height="16"><use href="#fc"/></svg>
<svg class="a" style="left:36.0px;top:270.4px" width="14" height="16"><use href="#fc"/></svg>
<svg class="a" style="left:36.0px;top:290.4px" width="14" height="16"><use href="#fc"/></svg>
<svg class="a" style="left:36.0px;top:310.4px" width="14" height="16"><use href="#fc"/></svg>
<svg class="a" style="left:10.5px;top:340.5px" width="14" height="16"><use href="#fc"/></svg>
<svg class="a" style="left:10.5px;top:370.5px" width="14" height="16"><use href="#fc"/></svg>
<svg class="a" style="left:12.0px;top:21.0px" width="17" height="16"><use href="#fo"/></svg>
<svg class="a" style="left:36.6px;top:129.6px" width="17" height="16"><use href="#fo"/></svg>
<svg class="a" style="left:11.6px;top:232.4px" width="17" height="16"><use href="#fo"/></svg>
<div class="a cb on" style="left:45.0px;top:159.0px"></div>
<div class="a cb on" style="left:55.0px;top:181.0px"></div>
</div>
<div class="a gbox" style="left:1009px;top:192px;width:265px;height:25px"></div>
<div class="a" style="left:1258px;top:217px;width:16px;height:402px;background:linear-gradient(90deg,#e9e9e9,#fdfdfd 30%,#fff);border-left:1px solid #cfcfcf"></div>
<div class="a sbb" style="left:1258px;top:217px"><div class="tri up"></div></div>
<div class="a" style="left:1258px;top:281px;width:15px;height:290px;background:linear-gradient(90deg,#f3f3f3,#fff 40%,#f1f1f1);border:1px solid #aaa;border-radius:2px"></div>
<div class="t" style="left:1262px;top:421px;font-size:8px;color:#999;line-height:3px">&#8801;</div>
<div class="a sbb" style="left:1258px;top:603px"><div class="tri dn"></div></div>
<div class="a" style="left:1009px;top:619px;width:249px;height:15px;background:linear-gradient(#ececec,#fff 35%,#fff);border-top:1px solid #cfcfcf"></div>
<div class="a sbb" style="left:1009px;top:619px;width:15px"><div class="tri lf"></div></div>
<div class="a" style="left:1025px;top:620px;width:195px;height:14px;background:linear-gradient(#f3f3f3,#fff 40%,#f3f3f3);border:1px solid #aaa;border-radius:2px"></div>
<div class="t" style="left:1117px;top:622px;font-size:9px;color:#999;letter-spacing:-0.5px">||||</div>
<div class="a sbb" style="left:1242px;top:619px;width:16px"><div class="tri rt"></div></div>
<div class="t" style="left:1144.6px;top:215.4px;font-size:10.5px;color:#1e9ad6;letter-spacing:0.35px">[ <u>ZOEK</u> ] een kaartlaag...</div>
<div class="a" style="left:1009px;top:657px;width:249px;height:267px;overflow:hidden">
<div class="t" style="left:-17px;top:11.3px;font-size:11px;font-weight:400;color:#222;letter-spacing:0.2px">stortplaatsen</div>
<div class="t" style="left:21.5px;top:31.5px;font-size:11px;font-weight:400;color:#222;letter-spacing:0.24px">voormalige stortplaats gesloten voor 1996</div>
<div class="t" style="left:21.2px;top:56.5px;font-size:11px;font-weight:400;color:#222;letter-spacing:0.24px">thans in gebruik zijnde stortplaats</div>
<div class="t" style="left:-7px;top:77.7px;font-size:11px;font-weight:400;color:#222;letter-spacing:0.12px">havens, strangen en plassen</div>
<div class="t" style="left:-7px;top:97.2px;font-size:11px;font-weight:400;color:#222;letter-spacing:0.12px">kwaliteit vaste bodem getoetst aan Besluit bodemkwaliteit</div>
<div class="t" style="left:31.5px;top:118.6px;font-size:11px;font-weight:400;color:#222;letter-spacing:0.08px">kleiner dan of gelijk aan AW</div>
<div class="t" style="left:31.5px;top:143.6px;font-size:11px;font-weight:400;color:#222;letter-spacing:0.08px">A</div>
<div class="t" style="left:31.5px;top:168.6px;font-size:11px;font-weight:400;color:#222;letter-spacing:0.08px">B</div>
<div class="t" style="left:31.5px;top:193.6px;font-size:11px;font-weight:400;color:#222;letter-spacing:0.08px">nooit</div>
<div class="t" style="left:20.5px;top:218.0px;font-size:11px;font-weight:400;color:#222;letter-spacing:0.1px">Weergegeven resultaten zijn afkomstig</div>
<div class="t" style="left:20.5px;top:234.4px;font-size:11px;font-weight:400;color:#222;letter-spacing:0.1px">uit waterbodemonderzoek Zwarte water</div>
<div class="t" style="left:20.5px;top:250.9px;font-size:11px;font-weight:400;color:#222;letter-spacing:0.1px">kenmerk BO-CD-100036449 (Movares)</div>
<div class="a" style="left:1.0px;top:113.9px;width:17px;height:17px;border-radius:50%;background:#00e600;border:1px solid #222"></div>
<div class="a" style="left:1.0px;top:139.0px;width:17px;height:17px;border-radius:50%;background:#ffff00;border:1px solid #222"></div>
<div class="a" style="left:1.0px;top:164.0px;width:17px;height:17px;border-radius:50%;background:#ffa500;border:1px solid #222"></div>
<div class="a" style="left:1.0px;top:188.7px;width:17px;height:17px;border-radius:50%;background:#ff0000;border:1px solid #222"></div>
<div class="a" style="left:-5.0px;top:28.5px;width:8px;height:8px;border-radius:50%;background:#8b5a2b"></div>
<div class="a" style="left:-5.0px;top:53.5px;width:8px;height:8px;border-radius:50%;background:#f00"></div>
</div>
<div class="a" style="left:1258px;top:662px;width:16px;height:262px;background:linear-gradient(90deg,#e9e9e9,#fdfdfd 30%,#fff);border-left:1px solid #cfcfcf"></div>
<div class="a sbb" style="left:1258px;top:662px"><div class="tri up"></div></div>
<div class="a" style="left:1258px;top:678px;width:15px;height:216px;background:linear-gradient(90deg,#f3f3f3,#fff 40%,#f1f1f1);border:1px solid #aaa;border-radius:2px"></div>
<div class="t" style="left:1262px;top:782px;font-size:8px;color:#999;line-height:3px">&#8801;</div>
<div class="a sbb" style="left:1258px;top:908px"><div class="tri dn"></div></div>
<div class="a" style="left:1009px;top:924px;width:249px;height:15px;background:linear-gradient(#ececec,#fff 35%,#fff);border-top:1px solid #cfcfcf"></div>
<div class="a sbb" style="left:1009px;top:924px;width:15px"><div class="tri lf"></div></div>
<div class="a" style="left:1045px;top:925px;width:162px;height:14px;background:linear-gradient(#f3f3f3,#fff 40%,#f3f3f3);border:1px solid #aaa;border-radius:2px"></div>
<div class="t" style="left:1121px;top:927px;font-size:9px;color:#999;letter-spacing:-0.5px">||||</div>
<div class="a sbb" style="left:1242px;top:924px;width:16px"><div class="tri rt"></div></div>


<!-- footer -->
<div class="a" style="left:12px;top:974px;width:1263px;height:1px;background:#c4c4c4"></div>
<div class="t" style="left:12.5px;top:979.5px;font-size:11px;color:#222;letter-spacing:1.0px">november 2011 - Provincie Overijssel - <b style="letter-spacing:1.6px">038 499 85 00</b> -</div>
<div class="t" style="left:346.5px;top:978.4px;font-size:13px;color:#1a9fd0;letter-spacing:0.6px">bodem@overijssel.nl</div>
<div class="t" style="left:1033.8px;top:980.1px;font-size:10px;color:#888;letter-spacing:0.65px">Bodematlas van Overijssel; disclaimer</div>
<div class="t" style="left:1230.2px;top:979.3px;font-size:11px;color:#1a9fd0;letter-spacing:0.94px">klik hier</div>
<div class="a" style="left:0;top:995px;width:1280px;height:1px;background:#dcd8d4"></div><div class="a" style="left:0;top:996px;width:1280px;height:1px;background:#f4f2f0"></div><div class="a" style="left:0;top:997px;width:1280px;height:2px;background:#d4d0c8"></div>

</body></html>
